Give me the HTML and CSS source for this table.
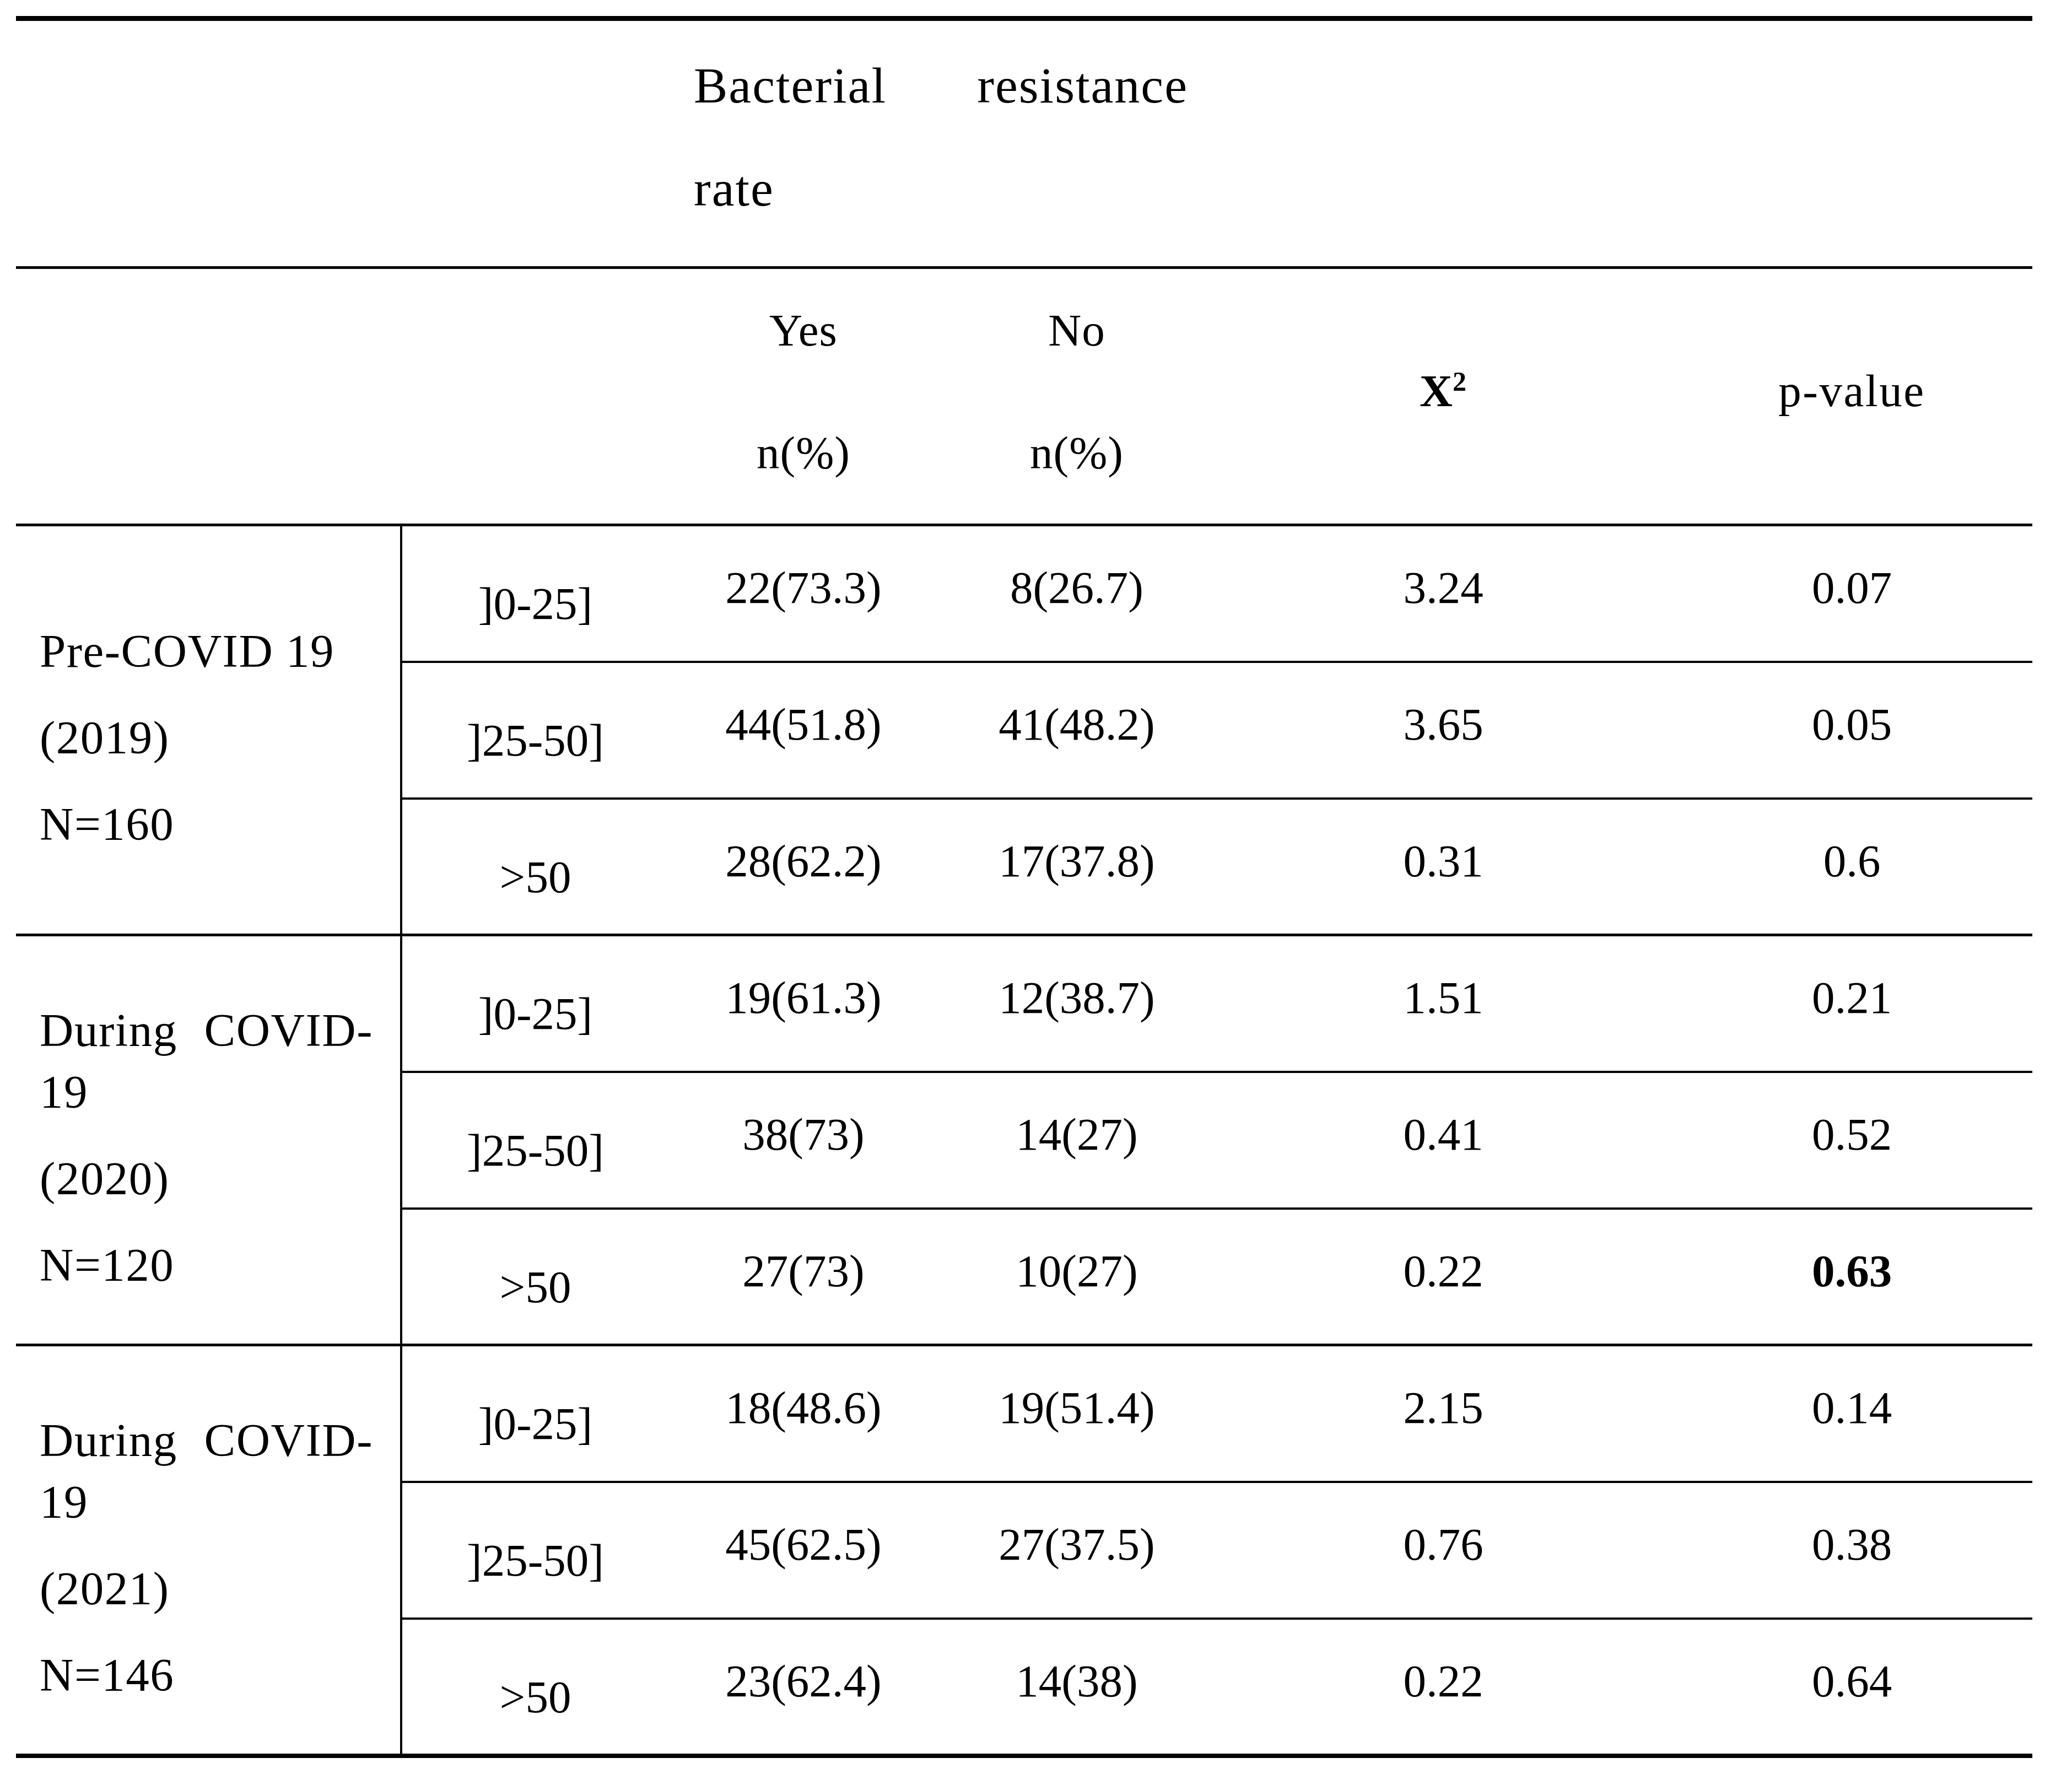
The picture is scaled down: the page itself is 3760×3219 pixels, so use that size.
FILE: index.html
```html
<!DOCTYPE html>
<html lang="en">
<head>
<meta charset="utf-8">
<title>Bacterial resistance rate by age</title>
<link rel="stylesheet" href="styles.css">
</head>
<body>
<div class="page">
<table class="tbl">
  <colgroup>
    <col class="c1"><col class="c2"><col class="c3"><col class="c4"><col class="c5"><col class="c6">
  </colgroup>
  <thead>
    <tr class="h1">
      <th colspan="2"></th>
      <th colspan="2" class="brr">Bacterial resistance rate</th>
      <th colspan="2"></th>
    </tr>
    <tr class="h2">
      <th colspan="2"></th>
      <th class="sub"><span>Yes</span><span>n(%)</span></th>
      <th class="sub"><span>No</span><span>n(%)</span></th>
      <th class="stat"><b class="chi">X</b><sup class="sq">2</sup></th>
      <th class="stat pval">p-value</th>
    </tr>
  </thead>
  <tbody>
    <tr class="r">
      <td rowspan="3" class="grp"><p>Pre-COVID 19</p><p>(2019)</p><p>N=160</p></td>
      <td class="age">]0-25]</td><td class="v">22(73.3)</td><td class="v">8(26.7)</td><td class="v">3.24</td><td class="v">0.07</td>
    </tr>
    <tr class="r">
      <td class="age">]25-50]</td><td class="v">44(51.8)</td><td class="v">41(48.2)</td><td class="v">3.65</td><td class="v">0.05</td>
    </tr>
    <tr class="r end">
      <td class="age">&gt;50</td><td class="v">28(62.2)</td><td class="v">17(37.8)</td><td class="v">0.31</td><td class="v">0.6</td>
    </tr>
    <tr class="r">
      <td rowspan="3" class="grp"><p>During COVID-&#8203;19</p><p>(2020)</p><p>N=120</p></td>
      <td class="age">]0-25]</td><td class="v">19(61.3)</td><td class="v">12(38.7)</td><td class="v">1.51</td><td class="v">0.21</td>
    </tr>
    <tr class="r">
      <td class="age">]25-50]</td><td class="v">38(73)</td><td class="v">14(27)</td><td class="v">0.41</td><td class="v">0.52</td>
    </tr>
    <tr class="r end">
      <td class="age">&gt;50</td><td class="v">27(73)</td><td class="v">10(27)</td><td class="v">0.22</td><td class="v strong">0.63</td>
    </tr>
    <tr class="r">
      <td rowspan="3" class="grp last"><p>During COVID-&#8203;19</p><p>(2021)</p><p>N=146</p></td>
      <td class="age">]0-25]</td><td class="v">18(48.6)</td><td class="v">19(51.4)</td><td class="v">2.15</td><td class="v">0.14</td>
    </tr>
    <tr class="r">
      <td class="age">]25-50]</td><td class="v">45(62.5)</td><td class="v">27(37.5)</td><td class="v">0.76</td><td class="v">0.38</td>
    </tr>
    <tr class="r final">
      <td class="age">&gt;50</td><td class="v">23(62.4)</td><td class="v">14(38)</td><td class="v">0.22</td><td class="v">0.64</td>
    </tr>
  </tbody>
</table>
</div>
</body>
</html>
```

FILE: styles.css
```css
html, body {
  margin: 0;
  padding: 0;
  background: #ffffff;
}

body {
  font-family: "Liberation Serif", "Times New Roman", serif;
  color: #000000;
}

.page {
  padding: 29px 0 0 29px;
}

.tbl {
  border-collapse: separate;
  border-spacing: 0;
  table-layout: fixed;
  width: 3659px;
  border-top: 9px solid #000;
}

.c1 { width: 701px; }
.c2 { width: 483px; }
.c3 { width: 490px; }
.c4 { width: 502px; }
.c5 { width: 828px; }
.c6 { width: 655px; }

.tbl th,
.tbl td {
  padding: 0 46px;
  font-weight: normal;
  font-size: 83px;
  line-height: 1.15;
  text-align: center;
  vertical-align: middle;
}

/* header row 1 */
.h1 { height: 450px; }
.h1 th { border-bottom: 5px solid #000; }

.brr {
  font-size: 92px !important;
  line-height: 187px !important;
  letter-spacing: 2px;
  text-align: justify !important;
  vertical-align: top !important;
  padding: 24px 49px 0 46px !important;
}

/* header row 2 */
.h2 { height: 467px; }
.h2 th { border-bottom: 5px solid #000; }

.sub {
  vertical-align: top !important;
}
.sub span {
  display: block;
  line-height: 222px;
  letter-spacing: 1px;
}

.stat {
  padding-bottom: 18px !important;
  letter-spacing: 1px;
}
.pval { letter-spacing: 2.5px; }

.chi {
  font-weight: bold;
  letter-spacing: 0;
}
.sq {
  font-size: 50px;
  font-weight: bold;
  vertical-align: 28px;
  line-height: 0;
}

/* body rows */
.r { height: 248px; }
.r td { border-bottom: 4px solid #000; }
.r.end td { border-bottom-width: 5px; }
.r.final { height: 251px; }
.r.final td { border-bottom-width: 8px; }

.v {
  padding-bottom: 20px !important;
}

.age {
  padding-top: 38px !important;
}

.strong { font-weight: bold !important; }

.grp {
  border-right: 4px solid #000;
  border-bottom: 5px solid #000 !important;
  text-align: justify !important;
  font-size: 85px !important;
  letter-spacing: 1.5px;
  padding: 26px 49px 0 43px !important;
}
.grp.last { border-bottom-width: 8px !important; }

.grp p {
  margin: 0 0 45px 0;
  line-height: 112px;
}
.grp p:last-child { margin-bottom: 0; }
```
